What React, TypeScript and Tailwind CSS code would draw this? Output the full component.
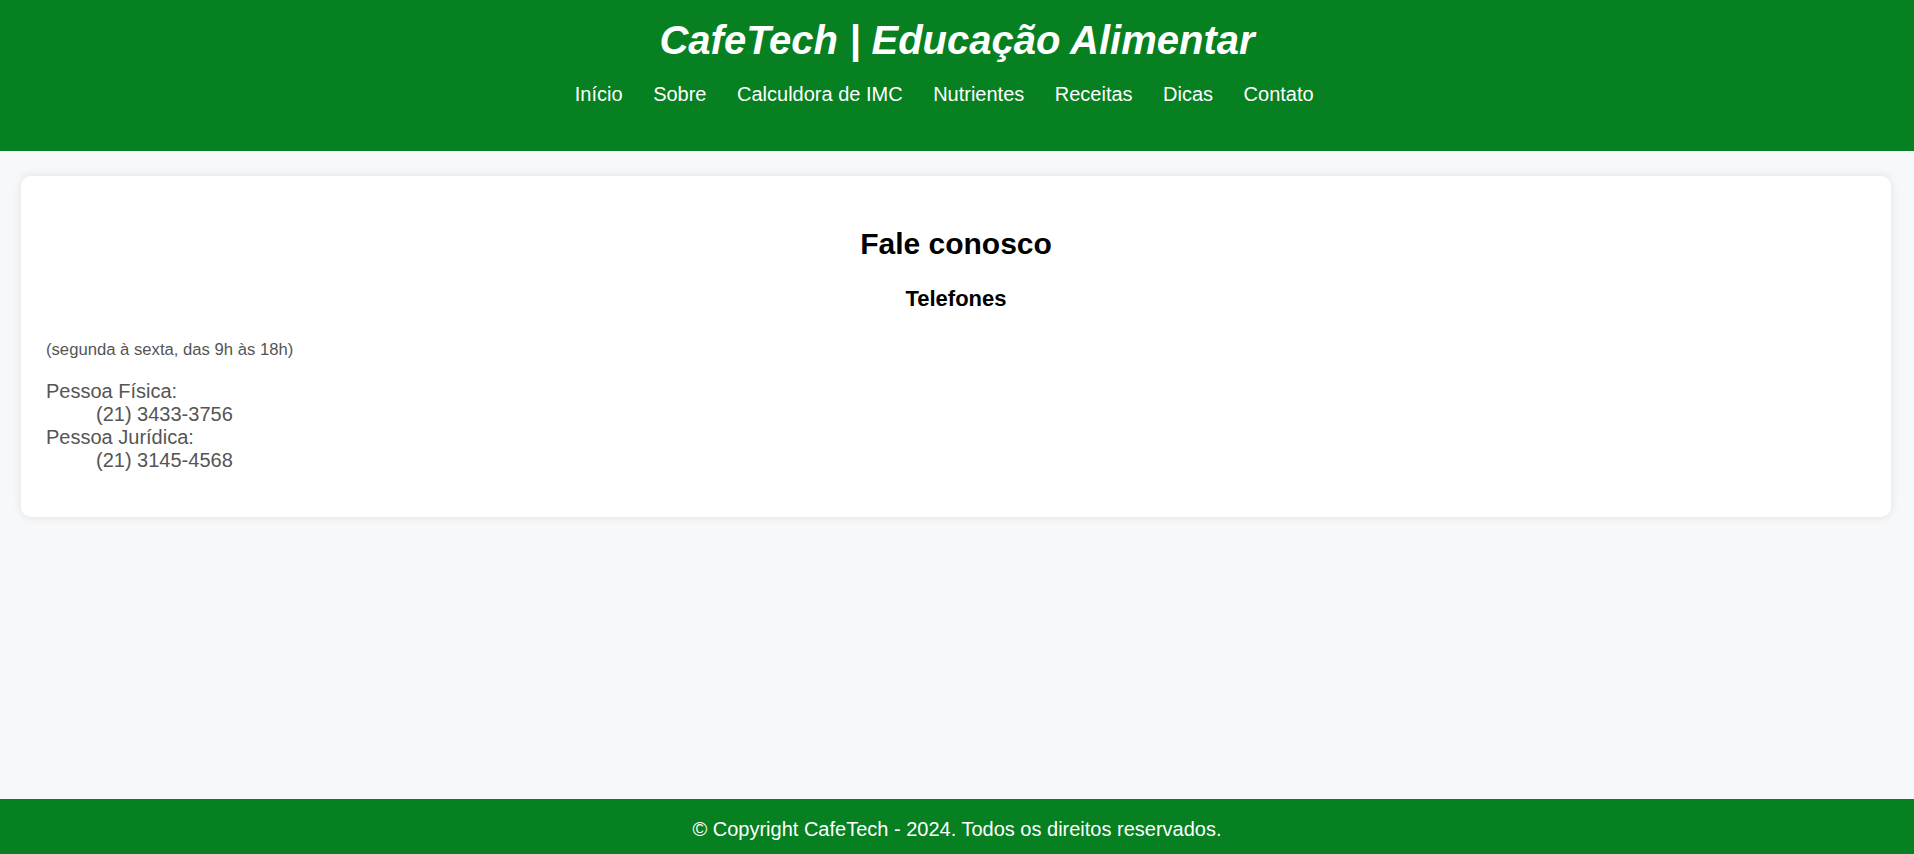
const links = ["Início", "Sobre", "Calculdora de IMC", "Nutrientes", "Receitas", "Dicas", "Contato"];

const App = () => {
  return (
    <div className="flex min-h-screen flex-col bg-[#f7f8fa] font-['Liberation_Sans',Arial,sans-serif]">
      <header className="bg-[#068020] pt-[17px] pb-[43px] text-center text-white">
        <h1 className="text-[40px] leading-[46px] font-bold italic">CafeTech | Educação Alimentar</h1>
        <nav className="mt-[20px]">
          <ul className="flex justify-center pl-[5px]">
            {links.map((link) => (
              <li key={link} className="mr-[30.5px]">
                <a href="#" className="text-[20px] leading-[23px] text-white">
                  {link}
                </a>
              </li>
            ))}
          </ul>
        </nav>
      </header>

      <main className="flex-1">
        <section className="mt-[25px] ml-[21px] mr-[23px] rounded-[10px] bg-white px-[25px] pt-[51px] pb-[45px] text-[20px] text-[#555] shadow-[0_0_10px_rgba(0,0,0,0.1)]">
          <h2 className="text-center text-[30px] leading-[34px] font-bold text-black">Fale conosco</h2>
          <h3 className="mt-[25px] text-center text-[22px] leading-[25px] font-bold text-black">Telefones</h3>
          <p className="mt-[29px] text-[16.67px] leading-[19px]">(segunda à sexta, das 9h às 18h)</p>
          <dl className="mt-[21px] leading-[23px]">
            <dt>Pessoa Física:</dt>
            <dd className="ml-[50px]">(21) 3433-3756</dd>
            <dt>Pessoa Jurídica:</dt>
            <dd className="ml-[50px]">(21) 3145-4568</dd>
          </dl>
        </section>
      </main>

      <footer className="bg-[#068020] pt-[19px] pb-[13px] text-center text-[20px] leading-[23px] text-white">
        <p>© Copyright CafeTech - 2024. Todos os direitos reservados.</p>
      </footer>
    </div>
  );
};

export default App;
